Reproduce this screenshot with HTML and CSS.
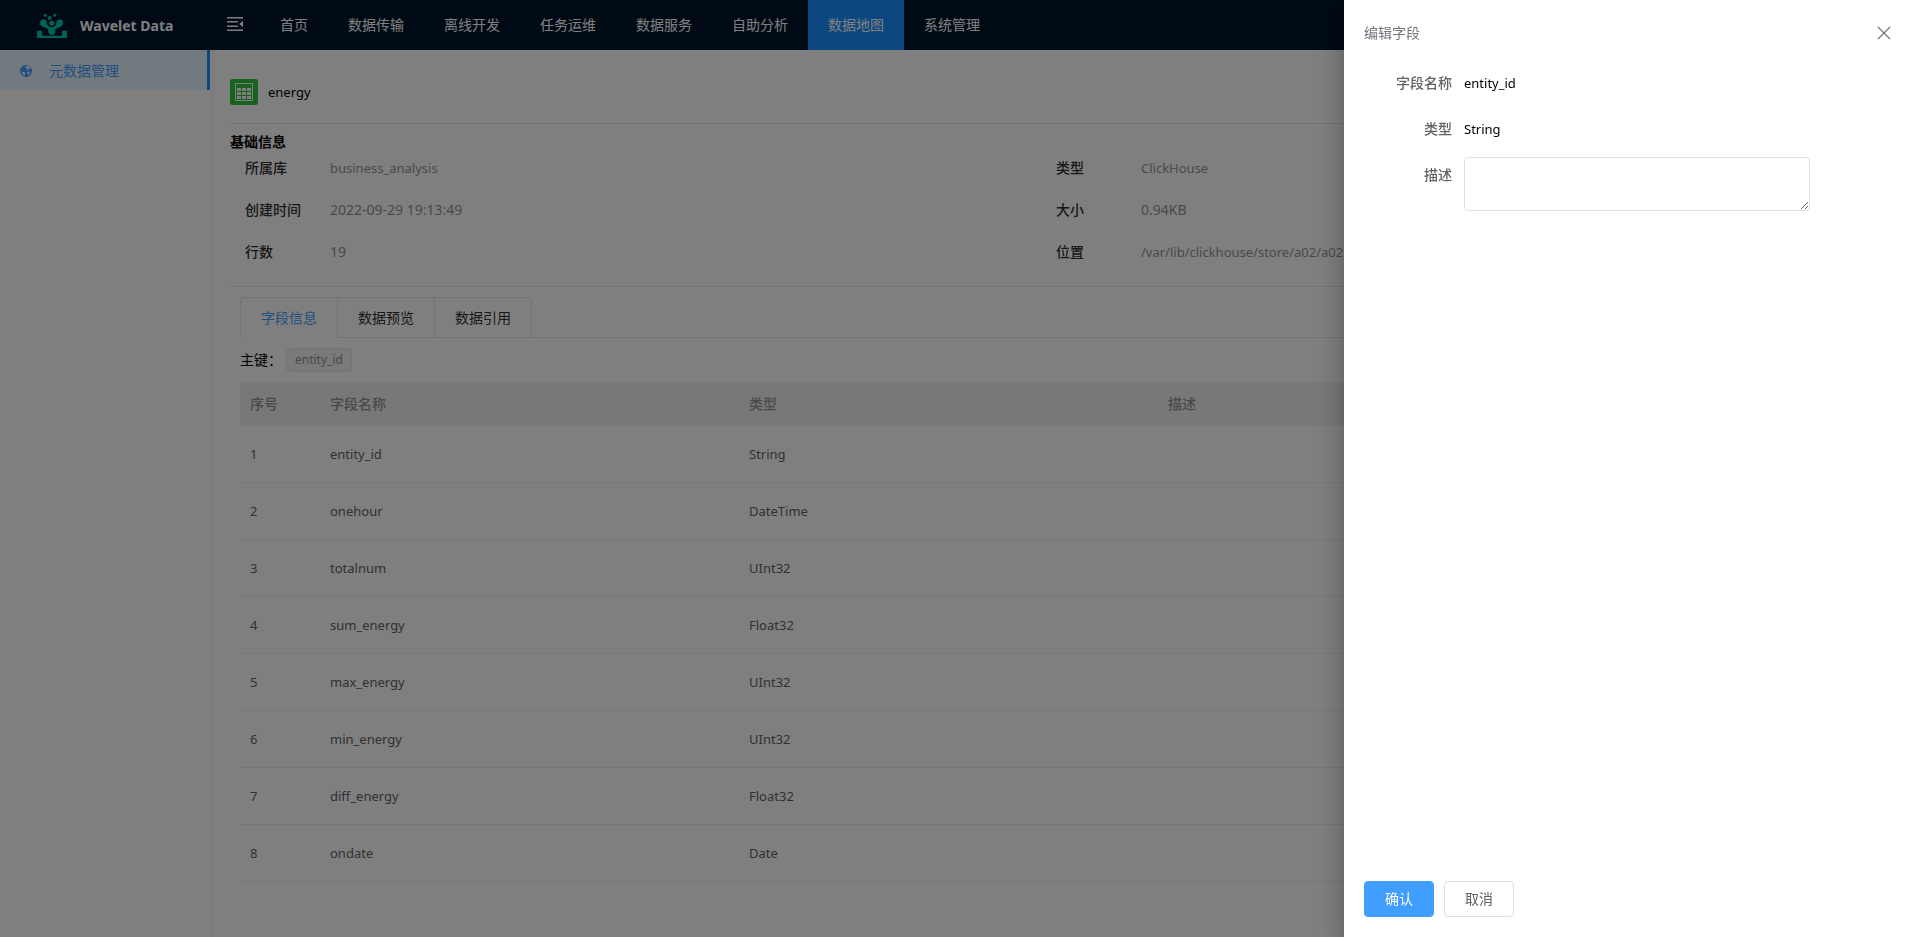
FILE: index.html
```html
<!DOCTYPE html>
<html lang="zh-CN">
<head>
<meta charset="utf-8">
<title>Wavelet Data</title>
<link rel="stylesheet" href="styles.css">
</head>
<body>
<div class="app">
  <header class="header">
    <div class="brand">
      <svg viewBox="0 0 30 26" width="30" height="26" fill="#00c4b0">
        <path d="M0 17.700h5v5h20v-5h5V25H0z"/>
        <circle cx="8.300" cy="2.300" r="1.500"/><circle cx="17.700" cy="2.300" r="1.500"/><circle cx="12.700" cy="5" r="2"/>
        <circle cx="6.500" cy="10" r="3.400"/><circle cx="22.700" cy="10" r="3.400"/><circle cx="14.700" cy="10.300" r="2.500"/>
        <path d="M5 13l4.500-2.500q2 3.700 5.200 3.700t5.200-3.700L24.300 13 18.500 16l-.5 3.500q-1 2.500-3.300 2.500t-3.300-2.500L11 16z"/>
      </svg>
      <span class="brand-name">Wavelet Data</span>
    </div>
    <button class="fold" aria-label="折叠菜单">
      <svg viewBox="0 0 16 14" width="16" height="14" fill="#fff"><path d="M0 0h16v1.500H0zM0 4h11v1.500H0zM0 8.500h11V10H0zM0 12.500h16V14H0zM16 3.800v6.400L12.300 7z"/></svg>
    </button>
    <nav class="nav">
      <a class="nav-item" href="#">首页</a>
      <a class="nav-item" href="#">数据传输</a>
      <a class="nav-item" href="#">离线开发</a>
      <a class="nav-item" href="#">任务运维</a>
      <a class="nav-item" href="#">数据服务</a>
      <a class="nav-item" href="#">自助分析</a>
      <a class="nav-item nav-active" href="#">数据地图</a>
      <a class="nav-item" href="#">系统管理</a>
    </nav>
  </header>
  <div class="body">
    <aside class="sidebar">
      <a class="side-item" href="#">
        <svg viewBox="0 0 12 12" width="12" height="12"><circle cx="6" cy="6" r="6" fill="#409eff"/><path fill="#e6f4ff" d="M6 1l2-.3L10 2l.8 1.500L9 3.800 7.800 5 6.500 5.200 7 3.800 5.500 3zM1 6.500L3 7l2 .5.3 1.500L4.500 10.800 3 10 2.500 8.500zM7 7l2-.5 1 1L9.300 9 8.300 10.300 7.800 9z"/></svg>
        <span>元数据管理</span>
      </a>
    </aside>
    <main class="main">
      <div class="title">
        <svg viewBox="0 0 28 26" width="28" height="26">
          <rect width="28" height="26" rx="2" fill="#32c23c"/>
          <path d="M5.500 4.500h17v17h-17z" fill="none" stroke="#fff"/>
          <path d="M7 9h4v3H7zM12 9h4v3h-4zM17 9h4v3h-4zM7 13h4v3H7zM12 13h4v3h-4zM17 13h4v3h-4zM7 17h4v3H7zM12 17h4v3h-4zM17 17h4v3h-4z" fill="#fff"/>
        </svg>
        <span class="latin">energy</span>
      </div>
      <section class="info">
        <h2 class="info-title">基础信息</h2>
        <dl class="info-grid">
          <dt>所属库</dt><dd class="latin">business_analysis</dd><dt>类型</dt><dd class="latin">ClickHouse</dd>
          <dt>创建时间</dt><dd>2022-09-29 19:13:49</dd><dt>大小</dt><dd>0.94KB</dd>
          <dt>行数</dt><dd>19</dd><dt>位置</dt><dd class="latin">/var/lib/clickhouse/store/a02/a02</dd>
        </dl>
      </section>
      <section class="detail">
        <div class="tabs" role="tablist">
          <button class="tab tab-active" role="tab" aria-selected="true">字段信息</button>
          <button class="tab" role="tab">数据预览</button>
          <button class="tab" role="tab">数据引用</button>
        </div>
        <div class="keys"><span>主键：</span><span class="tag">entity_id</span></div>
        <table class="table">
          <colgroup><col class="col-no"><col class="col-field"><col class="col-field"><col></colgroup>
          <thead><tr><th>序号</th><th>字段名称</th><th>类型</th><th>描述</th></tr></thead>
          <tbody>
            <tr><td>1</td><td>entity_id</td><td>String</td><td></td></tr>
            <tr><td>2</td><td>onehour</td><td>DateTime</td><td></td></tr>
            <tr><td>3</td><td>totalnum</td><td>UInt32</td><td></td></tr>
            <tr><td>4</td><td>sum_energy</td><td>Float32</td><td></td></tr>
            <tr><td>5</td><td>max_energy</td><td>UInt32</td><td></td></tr>
            <tr><td>6</td><td>min_energy</td><td>UInt32</td><td></td></tr>
            <tr><td>7</td><td>diff_energy</td><td>Float32</td><td></td></tr>
            <tr><td>8</td><td>ondate</td><td>Date</td><td></td></tr>
          </tbody>
        </table>
      </section>
    </main>
  </div>
</div>
<div class="mask">
  <div class="drawer" role="dialog" aria-labelledby="drawer-title">
    <div class="drawer-head">
      <span id="drawer-title">编辑字段</span>
      <button class="close" aria-label="关闭"><svg viewBox="0 0 14 14" width="14" height="14" fill="none" stroke="#72767b" stroke-width="1.200"><path d="M1 1l12 12M13 1L1 13"/></svg></button>
    </div>
    <form class="form">
      <div class="form-row"><span class="form-label">字段名称</span><span class="latin">entity_id</span></div>
      <div class="form-row"><span class="form-label">类型</span><span class="latin">String</span></div>
      <div class="form-row"><label class="form-label" for="desc">描述</label><textarea id="desc" class="textarea"></textarea></div>
    </form>
    <div class="drawer-foot">
      <button class="btn btn-primary">确认</button>
      <button class="btn">取消</button>
    </div>
  </div>
</div>
</body>
</html>
```
FILE: styles.css
```css
* { box-sizing: border-box; }
body {
  margin: 0;
  font: 14px/20px "Noto Sans", "Noto Sans CJK SC", sans-serif;
  color: #000;
  overflow: hidden;
}
button, textarea { font: inherit; }
a { text-decoration: none; }
.latin { font-size: 13px; }

.app { min-height: 100vh; display: flex; flex-direction: column; background: #fff; }
.header { height: 50px; display: flex; background: #001529; color: #fff; }
.brand { width: 210px; padding: 2px 0 0 37px; display: flex; align-items: center; gap: 13px; }
.brand-name { font-weight: 700; white-space: nowrap; }
.fold { width: 50px; padding: 0 0 2px 17px; border: 0; background: none; display: flex; align-items: center; }
.nav { display: flex; }
.nav-item { padding: 0 20px; line-height: 50px; color: #fff; }
.nav-active { background: #1890ff; }

.body { flex: 1; display: flex; }
.sidebar { width: 215px; border-right: 5px solid #fafafa; }
.side-item {
  height: 40px; padding: 1px 20px 0; display: flex; align-items: center; gap: 17px;
  background: #e6f4ff; border-right: 3px solid #1890ff; color: #409eff;
}
.main { flex: 1; min-width: 0; padding: 0 30px 0 15px; }
.title { height: 74px; padding-top: 10px; display: flex; align-items: center; gap: 10px; border-bottom: 1px solid #e4e7ed; }
.info { height: 163px; padding-top: 8px; border-bottom: 1px solid #e4e7ed; }
.info-title { margin: 0; font-size: 14px; font-weight: 700; }
.info-grid { margin: 0; padding-left: 15px; display: grid; grid-template-columns: 85px 726px 85px 1fr; line-height: 32px; row-gap: 10px; }
dt { font-weight: 500; color: #303133; }
dd { margin: 0; color: #909399; }

.detail { padding: 10px; }
.tabs { display: flex; border-bottom: 1px solid #e4e7ed; }
.tab { height: 40px; padding: 0 20px; border: 1px solid #e4e7ed; border-width: 1px 1px 0 0; background: #fff; color: #303133; }
.tab:first-child { border-left-width: 1px; border-top-left-radius: 4px; }
.tab:last-child { border-top-right-radius: 4px; }
.tab-active { color: #409eff; height: 41px; margin-bottom: -1px; }
.keys { padding: 10px 0; display: flex; align-items: center; gap: 4px; }
.tag { padding: 0 8px; line-height: 22px; font-size: 12px; color: #909399; background: #f4f4f5; border: 1px solid #e9e9eb; border-radius: 4px; }
.table { width: 100%; table-layout: fixed; border-collapse: separate; border-spacing: 0; text-align: left; color: #606266; }
.col-no { width: 80px; }
.col-field { width: 419px; }
.table th { height: 44px; padding: 0 10px; background: #f0f0f0; color: #909399; font-weight: 500; }
.table td { height: 57px; padding: 0 10px; border-bottom: 1px solid #ebeef5; font-size: 13px; }

.mask { position: fixed; inset: 0; background: rgba(0, 0, 0, .5); display: flex; justify-content: flex-end; }
.drawer {
  width: 30%; padding: 20px; display: flex; flex-direction: column; background: #fff;
  box-shadow: 0 8px 10px -5px rgba(0, 0, 0, .2), 0 16px 24px 2px rgba(0, 0, 0, .14), 0 6px 30px 5px rgba(0, 0, 0, .12);
}
.drawer-head { height: 26px; display: flex; align-items: center; justify-content: space-between; color: #72767b; }
.close { padding: 0 9px; border: 0; background: none; display: flex; }
.form { flex: 1; padding: 19px 90px 0 0; display: flex; flex-direction: column; gap: 10px; }
.form-row { display: flex; line-height: 36px; }
.form-label { width: 100px; padding-right: 12px; text-align: right; font-weight: 500; color: #606266; }
.textarea { flex: 1; min-width: 0; height: 54px; border: 1px solid #dcdfe6; border-radius: 4px; resize: vertical; }
.drawer-foot { display: flex; gap: 10px; }
.btn { height: 36px; padding: 0 20px; border: 1px solid #dcdfe6; border-radius: 4px; background: #fff; color: #606266; }
.btn-primary { background: #409eff; border-color: #409eff; color: #fff; }
```
